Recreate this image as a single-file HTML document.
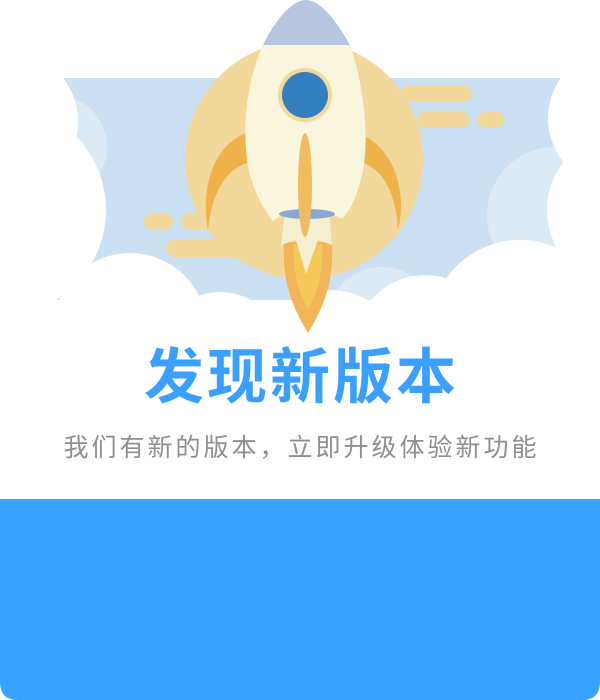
<!DOCTYPE html>
<html><head><meta charset="utf-8"><style>
html,body{margin:0;padding:0;background:#fff;width:600px;height:700px;overflow:hidden}
.t{position:absolute;left:0;width:600px;text-align:center;font-family:"Liberation Sans","Noto Sans CJK SC",sans-serif}
</style></head><body>
<svg width="600" height="700" style="position:absolute;left:0;top:0">
<defs><clipPath id="c"><rect x="15" y="78" width="570" height="232"/></clipPath></defs>
<g clip-path="url(#c)">
<rect x="15" y="78" width="570" height="232" fill="#cbe1f3"/>
<circle cx="55" cy="147" r="52" fill="#dceaf6"/>
<circle cx="555" cy="215" r="68" fill="#dceaf6"/>
<circle cx="382" cy="322" r="55" fill="#dceaf6"/>
<circle cx="5" cy="122" r="73" fill="#fff"/>
<circle cx="0" cy="210" r="106" fill="#fff"/>
<circle cx="618" cy="118" r="70" fill="#fff"/>
<circle cx="625" cy="210" r="78" fill="#fff"/>
</g>
<circle cx="304" cy="160" r="119" fill="#f2d99b"/>
<rect x="400" y="86" width="72" height="16" rx="8" fill="#f2d99b"/>
<rect x="417" y="112" width="53" height="16" rx="8" fill="#f2d99b"/>
<rect x="477" y="112" width="27" height="16" rx="8" fill="#f2d99b"/>
<rect x="144" y="214" width="29" height="16" rx="8" fill="#f2d99b"/>
<rect x="181" y="214" width="30" height="16" rx="8" fill="#f2d99b"/>
<rect x="166" y="240" width="80" height="17" rx="8.5" fill="#f2d99b"/>
<g fill="#fff">
<circle cx="130" cy="330" r="77"/>
<circle cx="220" cy="355" r="63"/>
<circle cx="330" cy="365" r="75"/>
<circle cx="425" cy="345" r="70"/>
<circle cx="520" cy="330" r="90"/>
<rect x="0" y="300" width="600" height="200"/>
</g>
<path d="M246 133 C215 145 200 185 208 230 C212 190 228 168 248 163 Z" fill="#f0b24b"/>
<path d="M366 137 C392 150 408 190 398 230 C396 195 385 172 364 163 Z" fill="#f0b24b"/>
<path d="M284 242 L332 242 C334 280 325 305 308 333 C291 305 282 280 284 242 Z" fill="#f2b55a"/>
<path d="M294 244 L322 244 C324 270 318 290 308 310 C298 290 292 270 294 244 Z" fill="#f5c85a"/>
<path d="M285 212 L329 212 L332 245 L318 240 L306 274 L296 240 L281 245 Z" fill="#f6f0d2"/>
<path d="M263 45 C275 20 292 0 306 0 C320 0 336 20 350 45 Z" fill="#b6c6e0"/>
<path d="M263 45 L350 45 C364 85 370 140 362 175 C357 195 352 208 342 219 L330 213 L285 213 L273 221 C260 205 248 180 246 150 C243 110 250 75 263 45 Z" fill="#faf5dd"/>
<ellipse cx="307" cy="214" rx="28" ry="5" fill="#8aa7d8"/>
<ellipse cx="305" cy="95" rx="27" ry="27" fill="#f2d99b"/>
<ellipse cx="305" cy="95" rx="23" ry="23" fill="#337fc0"/>
<ellipse cx="305" cy="185" rx="7" ry="52" fill="#f0bc62"/>
<path d="M0 499 H600 V682 Q600 700 582 700 H18 Q0 700 0 682 Z" fill="#39a1ff"/>
</svg>
<div class="t" style="top:342px;font-size:60px;line-height:72px;font-weight:bold;color:#3a9ffd;letter-spacing:3px;text-indent:3px">发现新版本</div>
<div class="t" style="top:432px;font-size:25px;line-height:32px;color:#8f8f8f;letter-spacing:3px;text-indent:3px">我们有新的版本，立即升级体验新功能</div>
</body></html>
